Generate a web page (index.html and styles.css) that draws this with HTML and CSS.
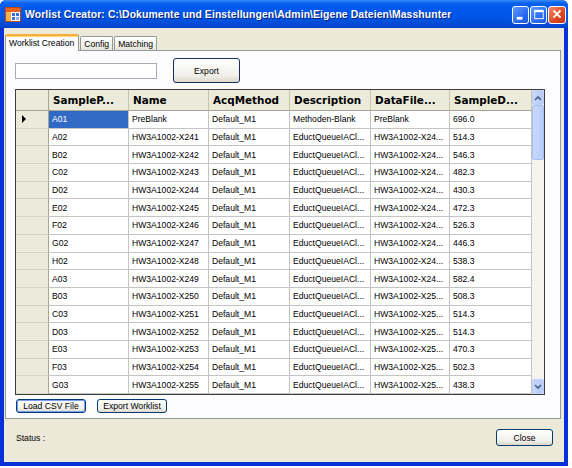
FILE: index.html
```html
<!DOCTYPE html>
<html>
<head>
  <link rel="stylesheet" href="styles.css">
</head>
<body>
  <div class="window">
    <div class="titlebar">
      <svg class="app-icon" width="16" height="15" viewBox="0 0 16 15">
        <rect x="0.5" y="0.5" width="15" height="14" fill="#fff" stroke="#b24a1c"/>
        <rect x="1" y="1" width="14" height="4" fill="#e8641e"/>
        <rect x="1" y="5" width="5" height="9" fill="#f4b04a"/>
        <rect x="7" y="6" width="3" height="3" fill="#3a6fd8"/>
        <rect x="11" y="6" width="3" height="3" fill="#3a6fd8"/>
        <rect x="7" y="10" width="3" height="3" fill="#3a6fd8"/>
        <rect x="11" y="10" width="3" height="3" fill="#8fb0ee"/>
      </svg>
      <span class="title">Worlist Creator: C:\Dokumente und Einstellungen\Admin\Eigene Dateien\Masshunter</span>
      <div class="caption-buttons">
        <span class="cap-btn min"><svg width="16" height="17" viewBox="0 0 16 17"><rect x="4" y="11" width="6" height="3" fill="#fff"/></svg></span>
        <span class="cap-btn max"><svg width="16" height="17" viewBox="0 0 16 17"><rect x="4" y="4" width="9" height="9" fill="none" stroke="#fff" stroke-width="1"/><rect x="4" y="4" width="9" height="2" fill="#fff"/></svg></span>
        <span class="cap-btn close"><svg width="18" height="17" viewBox="0 0 18 17"><path d="M5 4 L13 12 M13 4 L5 12" stroke="#fff" stroke-width="2"/></svg></span>
      </div>
    </div>

    <div class="client">
      <div class="tabs">
        <div class="tab active">Worklist Creation</div>
        <div class="tab">Config</div>
        <div class="tab">Matching</div>
      </div>

      <div class="tab-page">
        <div class="toolbar">
          <div class="textbox"></div>
          <button class="btn btn-export">Export</button>
        </div>

        <div class="datagrid">
          <div class="grid-body">
            <div class="hcell corner"></div>
            <div class="hcell">SampleP...</div>
            <div class="hcell">Name</div>
            <div class="hcell">AcqMethod</div>
            <div class="hcell">Description</div>
            <div class="hcell">DataFile...</div>
            <div class="hcell">SampleD...</div>

            <div class="rh current"><span class="arrow"></span></div>
            <div class="cell selected">A01</div><div class="cell">PreBlank</div><div class="cell">Default_M1</div><div class="cell">Methoden-Blank</div><div class="cell">PreBlank</div><div class="cell">696.0</div>

            <div class="rh"></div>
            <div class="cell">A02</div><div class="cell">HW3A1002-X241</div><div class="cell">Default_M1</div><div class="cell">EductQueueIACl...</div><div class="cell">HW3A1002-X24...</div><div class="cell">514.3</div>

            <div class="rh"></div>
            <div class="cell">B02</div><div class="cell">HW3A1002-X242</div><div class="cell">Default_M1</div><div class="cell">EductQueueIACl...</div><div class="cell">HW3A1002-X24...</div><div class="cell">546.3</div>

            <div class="rh"></div>
            <div class="cell">C02</div><div class="cell">HW3A1002-X243</div><div class="cell">Default_M1</div><div class="cell">EductQueueIACl...</div><div class="cell">HW3A1002-X24...</div><div class="cell">482.3</div>

            <div class="rh"></div>
            <div class="cell">D02</div><div class="cell">HW3A1002-X244</div><div class="cell">Default_M1</div><div class="cell">EductQueueIACl...</div><div class="cell">HW3A1002-X24...</div><div class="cell">430.3</div>

            <div class="rh"></div>
            <div class="cell">E02</div><div class="cell">HW3A1002-X245</div><div class="cell">Default_M1</div><div class="cell">EductQueueIACl...</div><div class="cell">HW3A1002-X24...</div><div class="cell">472.3</div>

            <div class="rh"></div>
            <div class="cell">F02</div><div class="cell">HW3A1002-X246</div><div class="cell">Default_M1</div><div class="cell">EductQueueIACl...</div><div class="cell">HW3A1002-X24...</div><div class="cell">526.3</div>

            <div class="rh"></div>
            <div class="cell">G02</div><div class="cell">HW3A1002-X247</div><div class="cell">Default_M1</div><div class="cell">EductQueueIACl...</div><div class="cell">HW3A1002-X24...</div><div class="cell">446.3</div>

            <div class="rh"></div>
            <div class="cell">H02</div><div class="cell">HW3A1002-X248</div><div class="cell">Default_M1</div><div class="cell">EductQueueIACl...</div><div class="cell">HW3A1002-X24...</div><div class="cell">538.3</div>

            <div class="rh"></div>
            <div class="cell">A03</div><div class="cell">HW3A1002-X249</div><div class="cell">Default_M1</div><div class="cell">EductQueueIACl...</div><div class="cell">HW3A1002-X24...</div><div class="cell">582.4</div>

            <div class="rh"></div>
            <div class="cell">B03</div><div class="cell">HW3A1002-X250</div><div class="cell">Default_M1</div><div class="cell">EductQueueIACl...</div><div class="cell">HW3A1002-X25...</div><div class="cell">508.3</div>

            <div class="rh"></div>
            <div class="cell">C03</div><div class="cell">HW3A1002-X251</div><div class="cell">Default_M1</div><div class="cell">EductQueueIACl...</div><div class="cell">HW3A1002-X25...</div><div class="cell">514.3</div>

            <div class="rh"></div>
            <div class="cell">D03</div><div class="cell">HW3A1002-X252</div><div class="cell">Default_M1</div><div class="cell">EductQueueIACl...</div><div class="cell">HW3A1002-X25...</div><div class="cell">514.3</div>

            <div class="rh"></div>
            <div class="cell">E03</div><div class="cell">HW3A1002-X253</div><div class="cell">Default_M1</div><div class="cell">EductQueueIACl...</div><div class="cell">HW3A1002-X25...</div><div class="cell">470.3</div>

            <div class="rh"></div>
            <div class="cell">F03</div><div class="cell">HW3A1002-X254</div><div class="cell">Default_M1</div><div class="cell">EductQueueIACl...</div><div class="cell">HW3A1002-X25...</div><div class="cell">502.3</div>

            <div class="rh"></div>
            <div class="cell">G03</div><div class="cell">HW3A1002-X255</div><div class="cell">Default_M1</div><div class="cell">EductQueueIACl...</div><div class="cell">HW3A1002-X25...</div><div class="cell">438.3</div>
          </div>

          <div class="vscroll">
            <div class="sb-btn"><svg width="10" height="8" viewBox="0 0 10 8"><path d="M2 6 L5 3 L8 6" fill="none" stroke="#4d6185" stroke-width="1.6"/></svg></div>
            <div class="sb-thumb"></div>
            <div class="sb-track"></div>
            <div class="sb-btn"><svg width="10" height="8" viewBox="0 0 10 8"><path d="M2 2 L5 5 L8 2" fill="none" stroke="#4d6185" stroke-width="1.6"/></svg></div>
          </div>
        </div>

        <div class="grid-actions">
          <button class="btn btn-small focused">Load CSV File</button>
          <button class="btn btn-small">Export Worklist</button>
        </div>
      </div>

      <div class="footer">
        <span class="status">Status :</span>
        <button class="btn btn-close">Close</button>
      </div>
    </div>
  </div>
</body>
</html>
```

FILE: styles.css
```css
body {
  margin: 0;
  background: #fff;
  font-family: "Liberation Sans", Arial, sans-serif;
  font-size: 8.6px;
  color: #000;
}

.window {
  width: 568px;
  height: 466px;
  display: flex;
  flex-direction: column;
  background: #0831d9;
  box-sizing: border-box;
  border-radius: 6px 6px 0 0;
}

.titlebar {
  height: 28px;
  display: flex;
  align-items: center;
  padding: 0 2px 0 5px;
  color: #fff;
  border-radius: 6px 6px 0 0;
  background: linear-gradient(#3a8cf8 0, #0a63ef 3px, #0058ee 8px, #0055e5 18px, #0048cf 26px, #0040c0 28px);
}

.app-icon {
  flex: none;
  margin-right: 4px;
}

.title {
  flex: 1;
  font-weight: bold;
  font-size: 10.4px;
  letter-spacing: 0.1px;
  white-space: nowrap;
  text-shadow: 1px 1px #0a1f7a;
}

.caption-buttons {
  display: flex;
  gap: 1px;
  margin-top: 1px;
}

.cap-btn {
  display: flex;
  align-items: center;
  justify-content: center;
  width: 17px;
  height: 18px;
  border: 1px solid #fff;
  border-radius: 3px;
  box-sizing: border-box;
  background: linear-gradient(135deg, #5e9bff, #2a6cf0 60%, #1c55d8);
}

.cap-btn.close {
  width: 18px;
  background: linear-gradient(135deg, #f08a6c, #e04a26 55%, #c0361a);
}

.client {
  flex: 1;
  margin: 0 4px 4px;
  background: #ece9d8;
  padding: 6px 3px 0 1px;
  display: flex;
  flex-direction: column;
}

.tabs {
  display: flex;
  height: 16px;
  align-items: flex-end;
  position: relative;
  z-index: 1;
}

.tab {
  height: 14px;
  padding: 0 3px;
  display: flex;
  align-items: center;
  border: 1px solid #919b9c;
  border-bottom: none;
  border-radius: 2px 2px 0 0;
  margin-right: 1px;
  background: linear-gradient(#fff, #f3f2ec 60%, #e6e4d6);
  box-sizing: border-box;
}

.tab.active {
  height: 17px;
  padding: 0 4px 1px 3px;
  margin-bottom: -1px;
  background: #fcfcfe;
  border-top: 2px solid #f6b03a;
  box-shadow: inset 0 1px #ffd77a;
}

.tab-page {
  height: 369px;
  box-sizing: border-box;
  border: 1px solid #919b9c;
  background: #fcfcfe;
  padding: 7px 0 0 9px;
}

.toolbar {
  display: flex;
  align-items: center;
  gap: 16px;
}

.textbox {
  width: 142px;
  height: 16px;
  box-sizing: border-box;
  border: 1px solid #a5acb5;
  background: #fff;
}

.btn {
  font-family: inherit;
  font-size: 8.6px;
  color: #000;
  border: 1px solid #003c74;
  border-radius: 3px;
  background: linear-gradient(#fff, #f1f0ea 70%, #dcd8cc);
  padding: 0;
  box-sizing: border-box;
}

.btn-export {
  width: 67px;
  height: 25px;
  border-color: #1a2e5e;
}

.datagrid {
  margin-top: 6px;
  width: 530px;
  height: 306px;
  box-sizing: border-box;
  border: 1px solid #3d3d3d;
  display: flex;
  background: #fff;
}

.grid-body {
  flex: 1;
  display: grid;
  grid-template-columns: 33px 80px 80px 81px 81px 79px 1fr;
  grid-template-rows: 21px repeat(16, 1fr);
}

.hcell {
  display: flex;
  align-items: center;
  padding-left: 4px;
  font-family: "DejaVu Sans", Verdana, sans-serif;
  font-weight: bold;
  font-size: 10.4px;
  white-space: nowrap;
  overflow: hidden;
  background: #ebeadb;
  border-right: 1px solid #c7c5b2;
  border-bottom: 1px solid #a7a593;
}

.hcell.corner {
  padding: 0;
  border-right-color: #a7a593;
}

.rh {
  background: #ebeadb;
  border-right: 1px solid #a7a593;
  border-bottom: 1px solid #d8d5c4;
  display: flex;
  align-items: center;
  padding-left: 6px;
}

.arrow {
  width: 0;
  height: 0;
  border-top: 4px solid transparent;
  border-bottom: 4px solid transparent;
  border-left: 4px solid #000;
}

.cell {
  display: flex;
  align-items: center;
  padding-left: 3px;
  white-space: nowrap;
  overflow: hidden;
  border-right: 1px solid #c4c4c4;
  border-bottom: 1px solid #c4c4c4;
}

.cell.selected {
  background: #316ac5;
  color: #fff;
}

.vscroll {
  width: 12px;
  display: flex;
  flex-direction: column;
  background: #f4f3ee;
}

.sb-btn {
  height: 15px;
  display: flex;
  align-items: center;
  justify-content: center;
  background: linear-gradient(90deg, #c8d7fb, #b8cbf7);
  border: 1px solid #c1d2f8;
  border-radius: 2px;
  box-sizing: border-box;
}

.sb-thumb {
  height: 55px;
  background: linear-gradient(90deg, #c9d8fc, #b9ccf8);
  border: 1px solid #a9bff0;
  border-radius: 2px;
  box-sizing: border-box;
}

.sb-track {
  flex: 1;
}

.grid-actions {
  display: flex;
  gap: 11px;
  margin-top: 4px;
  padding-left: 1px;
}

.btn-small {
  width: 70px;
  height: 14px;
}

.btn-small.focused {
  box-shadow: inset 0 0 0 1px #7a9ff0;
}

.footer {
  flex: 1;
  display: flex;
  align-items: center;
  justify-content: space-between;
  padding: 0 8px 6px 11px;
}

.btn-close {
  width: 57px;
  height: 17px;
}
```
